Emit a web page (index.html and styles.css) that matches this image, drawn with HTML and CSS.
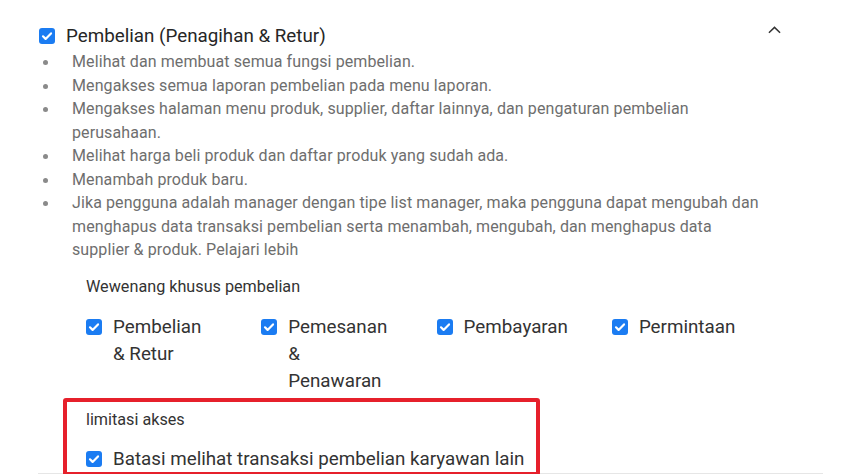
FILE: index.html
```html
<!DOCTYPE html>
<html lang="id">
<head>
<meta charset="utf-8">
<title>Pembelian</title>
<link rel="stylesheet" href="styles.css">
</head>
<body>
<section class="section">
  <div class="header">
    <span class="cb"><svg viewBox="0 0 16 16"><path d="M4 8.3l2.6 2.6L12 5.4" fill="none" stroke="#fff" stroke-width="2.2" stroke-linecap="round" stroke-linejoin="round"/></svg></span>
    <span class="title">Pembelian (Penagihan &amp; Retur)</span>
    <svg class="chev" viewBox="0 0 14 8"><path d="M1 7L7 1.2 13 7" fill="none" stroke="#333" stroke-width="1.6"/></svg>
  </div>
  <ul class="list">
    <li>Melihat dan membuat semua fungsi pembelian.</li>
    <li>Mengakses semua laporan pembelian pada menu laporan.</li>
    <li>Mengakses halaman menu produk, supplier, daftar lainnya, dan pengaturan pembelian perusahaan.</li>
    <li>Melihat harga beli produk dan daftar produk yang sudah ada.</li>
    <li>Menambah produk baru.</li>
    <li>Jika pengguna adalah manager dengan tipe list manager, maka pengguna dapat mengubah dan menghapus data transaksi pembelian serta menambah, mengubah, dan menghapus data supplier &amp; produk. Pelajari lebih</li>
  </ul>
  <div class="group">
    <div class="group-label">Wewenang khusus pembelian</div>
    <div class="options">
      <label class="opt"><span class="cb"><svg viewBox="0 0 16 16"><path d="M4 8.3l2.6 2.6L12 5.4" fill="none" stroke="#fff" stroke-width="2.2" stroke-linecap="round" stroke-linejoin="round"/></svg></span><span class="opt-text">Pembelian &amp; Retur</span></label>
      <label class="opt"><span class="cb"><svg viewBox="0 0 16 16"><path d="M4 8.3l2.6 2.6L12 5.4" fill="none" stroke="#fff" stroke-width="2.2" stroke-linecap="round" stroke-linejoin="round"/></svg></span><span class="opt-text">Pemesanan &amp; Penawaran</span></label>
      <label class="opt"><span class="cb"><svg viewBox="0 0 16 16"><path d="M4 8.3l2.6 2.6L12 5.4" fill="none" stroke="#fff" stroke-width="2.2" stroke-linecap="round" stroke-linejoin="round"/></svg></span><span class="opt-text">Pembayaran</span></label>
      <label class="opt"><span class="cb"><svg viewBox="0 0 16 16"><path d="M4 8.3l2.6 2.6L12 5.4" fill="none" stroke="#fff" stroke-width="2.2" stroke-linecap="round" stroke-linejoin="round"/></svg></span><span class="opt-text">Permintaan</span></label>
    </div>
  </div>
  <div class="group limit">
    <div class="highlight"></div>
    <div class="group-label">limitasi akses</div>
    <label class="opt single"><span class="cb"><svg viewBox="0 0 16 16"><path d="M4 8.3l2.6 2.6L12 5.4" fill="none" stroke="#fff" stroke-width="2.2" stroke-linecap="round" stroke-linejoin="round"/></svg></span><span class="opt-text">Batasi melihat transaksi pembelian karyawan lain</span></label>
  </div>
</section>
</body>
</html>
```
FILE: styles.css
```css
html, body {
  margin: 0;
  padding: 0;
  background: #fff;
}
body {
  font-family: Roboto, "Liberation Sans", sans-serif;
  color: #333;
}
.section {
  margin-left: 38px;
  width: 785px;
  padding-top: 27px;
  padding-left: 1px;
  box-sizing: border-box;
  border-bottom: 1px solid #e6e6e6;
}
.header {
  display: flex;
  align-items: center;
  height: 18px;
}
.cb {
  flex: none;
  width: 16px;
  height: 16px;
  border-radius: 3px;
  background: #1b7cf2;
  display: inline-flex;
}
.cb svg {
  width: 16px;
  height: 16px;
}
.title {
  margin-left: 11px;
  font-size: 18.8px;
  color: #262626;
  line-height: 18px;
}
.chev {
  width: 13px;
  height: 8px;
  margin-left: auto;
  margin-right: 42px;
  align-self: flex-start;
  margin-top: -1px;
}
.list {
  list-style: none;
  margin: 5px 0 0 0;
  padding: 0;
  width: 730px;
  font-size: 16px;
  letter-spacing: 0.1px;
  line-height: 23.5px;
  color: #6e6e6e;
}
.list li {
  position: relative;
  padding-left: 33px;
}
.list li::before {
  content: "";
  position: absolute;
  left: 4px;
  top: 10px;
  width: 5px;
  height: 5px;
  border-radius: 50%;
  background: #8a8a8a;
}
.group {
  margin-left: 47px;
}
.group-label {
  font-size: 16.2px;
  line-height: 20px;
  color: #333;
  margin-top: 15px;
}
.options {
  display: grid;
  grid-template-columns: repeat(4, 175.3px);
  margin-top: 17px;
}
.opt {
  display: flex;
  align-items: flex-start;
  gap: 11px;
  font-size: 18.8px;
  line-height: 27px;
  color: #333;
}
.opt .cb {
  margin-top: 5.5px;
}
.opt-text {
  max-width: 102px;
}
.single .opt-text {
  max-width: none;
}
.limit {
  position: relative;
  margin-top: 0;
}
.limit .group-label {
  margin-top: 15px;
}
.single {
  margin-top: 16px;
}
.highlight {
  position: absolute;
  left: -23px;
  top: -12px;
  width: 477px;
  bottom: -3px;
  box-sizing: border-box;
  border: 4px solid #e6202b;
  border-radius: 3px;
  pointer-events: none;
}
```
